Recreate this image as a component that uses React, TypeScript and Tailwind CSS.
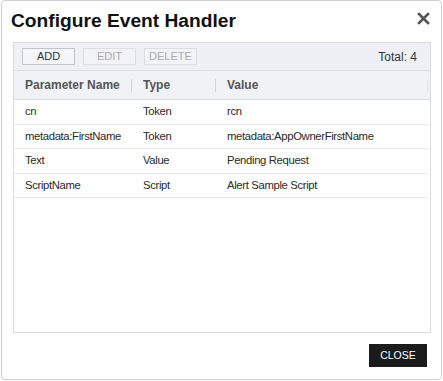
import React from "react";

const rows = [
  { name: "cn", type: "Token", value: "rcn" },
  { name: "metadata:FirstName", type: "Token", value: "metadata:AppOwnerFirstName" },
  { name: "Text", type: "Value", value: "Pending Request" },
  { name: "ScriptName", type: "Script", value: "Alert Sample Script" },
];

export default function App() {
  return (
    <div className="w-[443px] h-[381px] bg-white font-['Liberation_Sans',Arial,sans-serif]">
      <div className="ml-px w-[441px] h-[380px] border border-[#cfcfcf] rounded-[4px] flex flex-col pt-[8px] pl-[11px] pr-[10px] pb-[12px]">
        {/* header */}
        <div className="flex items-start justify-between h-[33px]">
          <h1 className="text-[19.2px] leading-[23px] font-bold text-[#111] -ml-[2px]">Configure Event Handler</h1>
          <button className="mt-[3px] mr-[1px] text-[#555]" aria-label="close">
            <svg width="13" height="13" viewBox="0 0 13 13">
              <path d="M2 2 L11 11 M11 2 L2 11" stroke="currentColor" strokeWidth="2.6" strokeLinecap="square" />
            </svg>
          </button>
        </div>

        {/* grid panel */}
        <div className="h-[291px] border border-[#d9dbe0] flex flex-col">
          <div className="h-[28px] bg-[#eff0f5] border-b border-[#dcdde2] flex items-center pl-[8px] pr-[13px] gap-[8px]">
            <button className="w-[53px] h-[17px] border border-[#c3c4c8] bg-[#f4f5f8] text-[11px] leading-none text-[#333]">ADD</button>
            <button className="w-[53px] h-[17px] border border-[#dcdde1] bg-[#f2f3f6] text-[11px] leading-none text-[#aaa]">EDIT</button>
            <button className="w-[53px] h-[17px] border border-[#dcdde1] bg-[#f2f3f6] text-[11px] leading-none text-[#aaa]">DELETE</button>
            <span className="ml-auto text-[12px] text-[#333]">Total: 4</span>
          </div>
          <div className="h-[29px] bg-[#f1f2f6] border-b border-[#dcdde2] grid grid-cols-[118px_84px_1fr] items-center text-[12px] font-bold text-[#555] pr-[2px]">
            <div className="pl-[11px] border-r border-[#d4d5da] h-[13px] flex items-center">Parameter Name</div>
            <div className="pl-[11px] border-r border-[#d4d5da] h-[13px] flex items-center">Type</div>
            <div className="pl-[11px] border-r border-[#e2e3e7] h-[13px] flex items-center">Value</div>
          </div>
          <div className="flex-1 pr-[2px]">
            {rows.map((r) => (
              <div
                key={r.name}
                className="h-[24.5px] border-b border-[#e8e8e8] grid grid-cols-[118px_84px_1fr] items-center text-[11.3px] tracking-[-0.35px] text-[#2a2a2a]"
              >
                <div className="pl-[11px]">{r.name}</div>
                <div className="pl-[11px]">{r.type}</div>
                <div className="pl-[11px]">{r.value}</div>
              </div>
            ))}
          </div>
        </div>

        <div className="flex justify-end mt-auto">
          <button className="w-[58px] h-[23px] bg-[#1b1b1b] text-white text-[10.5px] leading-none mr-[4px]">CLOSE</button>
        </div>
      </div>
    </div>
  );
}
